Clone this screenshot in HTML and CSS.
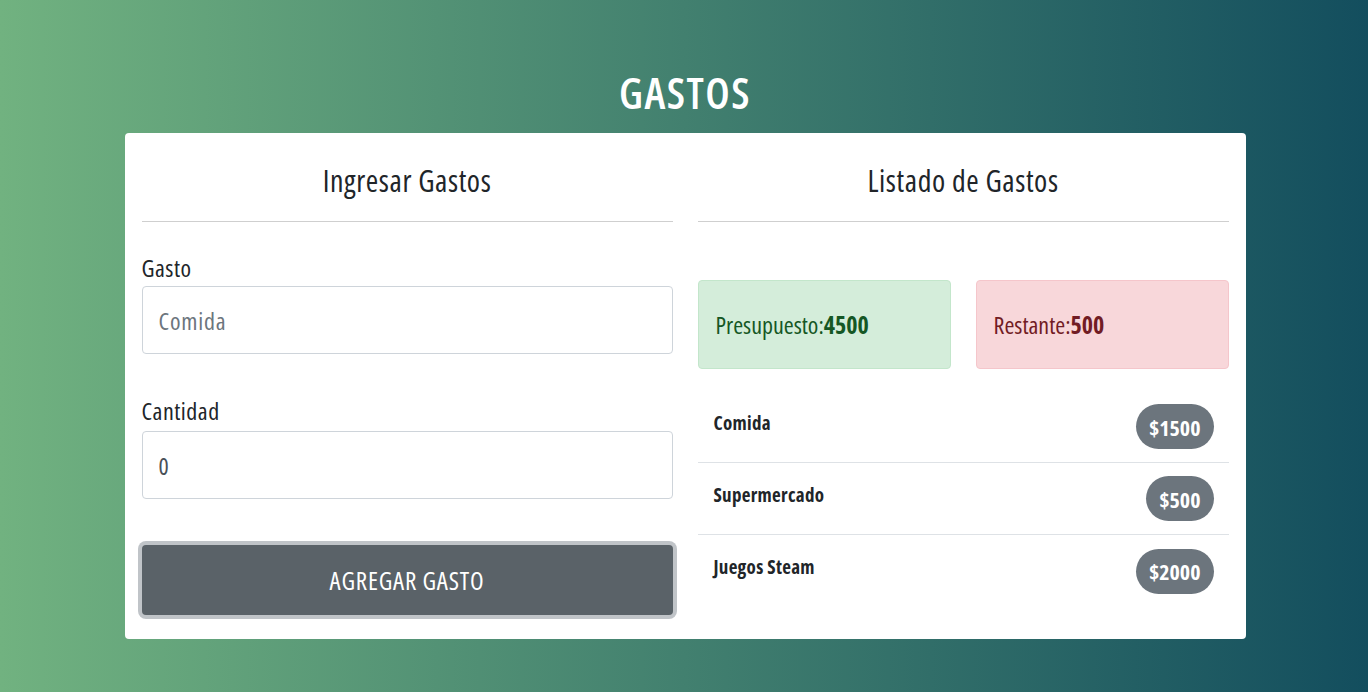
FILE: index.html
```html
<!DOCTYPE html>
<html lang="es">
<head>
<meta charset="utf-8">
<title>Gastos</title>
<link rel="stylesheet" href="styles.css">
</head>
<body>
<header class="page-header">
  <h1 class="page-title">GASTOS</h1>
</header>
<main class="card">
  <section class="col">
    <h2 class="col-title">Ingresar Gastos</h2>
    <hr class="divider">
    <form class="form">
      <label class="label" for="gasto">Gasto</label>
      <input class="input" id="gasto" type="text" placeholder="Comida">
      <label class="label label-second" for="cantidad">Cantidad</label>
      <input class="input input-second" id="cantidad" type="text" value="0">
      <button class="btn" type="button">AGREGAR GASTO</button>
    </form>
  </section>
  <section class="col">
    <h2 class="col-title">Listado de Gastos</h2>
    <hr class="divider">
    <div class="alerts">
      <div class="alert alert-success">Presupuesto:<b>4500</b></div>
      <div class="alert alert-danger">Restante:<b>500</b></div>
    </div>
    <ul class="list">
      <li class="item"><span class="item-name">Comida</span><span class="badge">$1500</span></li>
      <li class="item"><span class="item-name">Supermercado</span><span class="badge">$500</span></li>
      <li class="item"><span class="item-name">Juegos Steam</span><span class="badge">$2000</span></li>
    </ul>
  </section>
</main>
</body>
</html>
```
FILE: styles.css
```css
* { box-sizing: border-box; }
html, body { height: 100%; }
body {
  margin: 0;
  padding-left: 2px;
  font-family: "Open Sans", "Noto Sans", sans-serif;
  font-stretch: 80%;
  color: #212529;
  background: linear-gradient(to right, #71b280, #134e5e);
  overflow: hidden;
}
.page-header {
  padding-top: 68px;
  padding-bottom: 15px;
  text-align: center;
}
.page-title {
  margin: 0;
  font-size: 43px;
  line-height: 50px;
  font-weight: 600;
  letter-spacing: 1.5px;
  color: #fff;
}
.card {
  width: 1121px;
  margin: 0 auto;
  background: #fff;
  border-radius: 4px;
  padding: 17px 17px 0;
  height: 506px;
  display: grid;
  grid-template-columns: 1fr 1fr;
  column-gap: 25px;
}
.col { display: flex; flex-direction: column; }
.col-title {
  margin: 13px 0 0;
  font-size: 30px;
  line-height: 36px;
  font-weight: 400;
  letter-spacing: 0.6px;
  text-align: center;
}
.divider {
  margin: 22px 0 0;
  border: 0;
  border-top: 1px solid #cfcfcf;
}
.form { display: flex; flex-direction: column; }
.label {
  margin-top: 30px;
  font-size: 24px;
  line-height: 32px;
  font-weight: 500;
  letter-spacing: 0.5px;
}
.label-second { margin-top: 41px; }
.input {
  margin-top: 2px;
  height: 68px;
  border: 1px solid #ced4da;
  border-radius: 4px;
  padding: 0 16px;
  font-family: inherit;
  font-stretch: 80%;
  font-size: 24px;
  letter-spacing: 0.8px;
  color: #495057;
  outline: none;
}
.input::placeholder { color: #6c757d; }
.input-second { margin-top: 4px; }
.btn {
  margin-top: 46px;
  height: 70px;
  border: 0;
  border-radius: 4px;
  background: #5a6268;
  color: #fff;
  font-family: inherit;
  font-stretch: 80%;
  font-size: 25px;
  letter-spacing: 0.8px;
  box-shadow: 0 0 0 4px #c0c4c8;
}
.alerts {
  margin-top: 58px;
  display: grid;
  grid-template-columns: 1fr 1fr;
  column-gap: 25px;
}
.alert {
  height: 89px;
  display: flex;
  align-items: center;
  padding: 0 17px;
  border: 1px solid;
  border-radius: 4px;
  font-size: 24px;
}
.alert-success { background: #d4edda; border-color: #c3e6cb; color: #155724; }
.alert-danger { background: #f8d7da; border-color: #f5c6cb; color: #721c24; }
.list {
  list-style: none;
  margin: 22px 0 0;
  padding: 0;
}
.item {
  height: 72px;
  display: flex;
  align-items: center;
  justify-content: space-between;
  padding: 0 15px 0 16px;
  border-bottom: 1px solid #dee2e6;
}
.item:last-child { border-bottom: 0; }
.item-name {
  font-size: 19px;
  font-weight: 700;
  letter-spacing: 0.3px;
  margin-bottom: 8px;
}
.badge {
  height: 45px;
  display: inline-flex;
  align-items: center;
  padding: 0 13px;
  border-radius: 23px;
  background: #6c757d;
  color: #fff;
  font-size: 22px;
  font-weight: 700;
}
```
